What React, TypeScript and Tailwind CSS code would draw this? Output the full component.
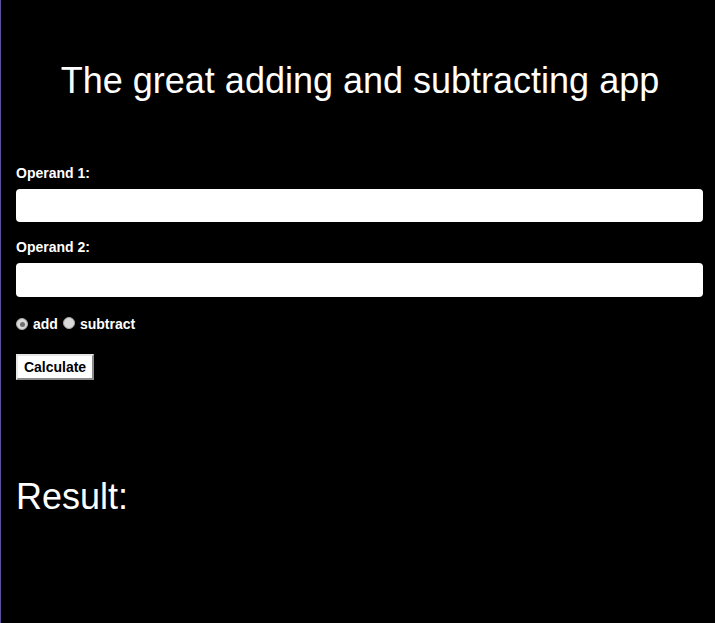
import React from "react";

function Radio({ checked }: { checked?: boolean }) {
  return (
    <span className="inline-flex h-[12px] w-[12px] items-center justify-center rounded-full border border-[#a9a9a9] bg-[#d9d9d9]">
      {checked && <span className="h-[5px] w-[5px] rounded-full bg-[#6f6f6f]" />}
    </span>
  );
}

export default function App() {
  return (
    <div
      className="min-h-[623px] border-l border-[#5b4f9e] bg-black text-white"
      style={{ fontFamily: '"Liberation Sans", Arial, sans-serif' }}
    >
      <h1 className="pl-[4px] pt-[60px] text-center text-[36px] leading-[41px]">
        The great adding and subtracting app
      </h1>
      <div className="pl-[15px] pr-[12px] pt-[64px]">
        <label className="block text-[14px] font-bold leading-[16px]">Operand 1:</label>
        <input className="mt-[8px] block h-[33px] w-full rounded-[4px] bg-white text-black outline-none" />
        <label className="mt-[17px] block text-[14px] font-bold leading-[16px]">Operand 2:</label>
        <input className="mt-[8px] block h-[34px] w-full rounded-[4px] bg-white text-black outline-none" />
        <div className="mt-[19px] flex h-[16px] items-center text-[14px] font-bold leading-[16px]">
          <Radio checked />
          <span className="ml-[5px]">add</span>
          <span className="ml-[5px]">
            <Radio />
          </span>
          <span className="ml-[5px]">subtract</span>
        </div>
        <button className="mt-[22px] block h-[26px] w-[78px] border-2 border-t-[#e6e6e6] border-l-[#e6e6e6] border-r-[#8a8a8a] border-b-[#8a8a8a] bg-white text-[14px] font-bold text-black">
          Calculate
        </button>
        <h2 className="mt-[96px] text-[36px] leading-[41px]">Result:</h2>
      </div>
    </div>
  );
}
